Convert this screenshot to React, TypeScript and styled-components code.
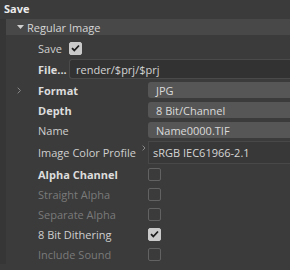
import styled, { createGlobalStyle } from 'styled-components';

const GlobalStyle = createGlobalStyle`
    html, body {
        margin: 0;
        padding: 0;
        background: #3b3b3b;
        overflow: hidden;
    }
    body {
        font-family: 'Open Sans', 'Noto Sans', sans-serif;
        font-size: 11px;
        color: #cfcfcf;
    }
`;

const Panel = styled.div`
    width: 290px;
    height: 270px;
    background: #3b3b3b;
`;

const Header = styled.div`
    height: 17px;
    display: flex;
    align-items: center;
    padding-left: 4px;
    font-weight: 700;
    color: #ececec;
`;

const Group = styled.div`
    margin-top: 2px;
    border-left: 6px solid #363636;
`;

const GroupTitle = styled.div`
    height: 16px;
    display: flex;
    align-items: center;
    gap: 3px;
    padding-left: 11px;
    background: #484848;
    color: #d6d6d6;
    margin-bottom: 3px;
`;

const Row = styled.div<{ $label: number; $height?: number }>`
    display: grid;
    grid-template-columns: 32px ${(p) => p.$label}px 1fr;
    align-items: center;
    height: ${(p) => p.$height ?? 20}px;
`;

const Gutter = styled.div`
    display: flex;
    align-items: center;
    padding-left: 11px;
`;

const Label = styled.div<{ $bold?: boolean; $dim?: boolean }>`
    display: flex;
    align-items: center;
    height: 100%;
    white-space: nowrap;
    font-weight: ${(p) => (p.$bold ? 700 : 400)};
    color: ${(p) => (p.$dim ? '#7a7a7a' : p.$bold ? '#dddddd' : '#cfcfcf')};
`;

const LabelChevron = styled.span`
    margin-left: auto;
    margin-right: 2px;
    align-self: flex-start;
    margin-top: 5px;
    display: flex;
`;

const Control = styled.div`
    display: flex;
    align-items: center;
    min-width: 0;
`;

const PathField = styled.div`
    flex: 1;
    height: 18px;
    display: flex;
    align-items: center;
    padding-left: 6px;
    background: #323232;
    border: 1px solid #4a4a4a;
    border-right: none;
    border-radius: 3px 0 0 3px;
    color: #d2d2d2;
    white-space: nowrap;
`;

const Dropdown = styled.div`
    flex: 1;
    height: 16px;
    display: flex;
    align-items: center;
    padding-left: 8px;
    background: #565656;
    border-radius: 3px 0 0 3px;
    color: #dadada;
    white-space: nowrap;
`;

const ProfileField = styled.div`
    flex: 1;
    height: 21px;
    display: flex;
    align-items: center;
    padding-left: 4px;
    background: #383838;
    border: 1px solid #484848;
    border-right: none;
    color: #d6d6d6;
    white-space: nowrap;
`;

const Box = styled.div<{ $checked?: boolean }>`
    width: 13px;
    height: 13px;
    box-sizing: border-box;
    border-radius: 2px;
    display: flex;
    align-items: center;
    justify-content: center;
    background: ${(p) => (p.$checked ? '#cacaca' : 'transparent')};
    border: 1px solid ${(p) => (p.$checked ? '#cacaca' : '#626262')};
`;

function Check({ checked }: { checked?: boolean }) {
    return (
        <Box $checked={checked}>
            {checked && (
                <svg width="9" height="8" viewBox="0 0 9 8">
                    <path d="M1 4.2 L3.3 6.5 L8 1.5" fill="none" stroke="#1c1c1c" strokeWidth="1.8" />
                </svg>
            )}
        </Box>
    );
}

function Chevron({ color = '#8a8a8a', size = 7 }: { color?: string; size?: number }) {
    return (
        <svg width={size * 0.6} height={size} viewBox="0 0 6 10">
            <path d="M1 1 L5 5 L1 9" fill="none" stroke={color} strokeWidth="1.4" />
        </svg>
    );
}

const SHORT = 31;
const LONG = 110;

const checkRows = [
    { label: 'Alpha Channel', bold: true },
    { label: 'Straight Alpha', dim: true },
    { label: 'Separate Alpha', dim: true },
    { label: '8 Bit Dithering', checked: true },
    { label: 'Include Sound', dim: true },
];

export default function App() {
    return (
        <Panel>
            <GlobalStyle />
            <Header>Save</Header>
            <Group>
                <GroupTitle>
                    <svg width="7" height="4" viewBox="0 0 7 4">
                        <polygon points="0,0 7,0 3.5,4" fill="#cfcfcf" />
                    </svg>
                    Regular Image
                </GroupTitle>

                <Row $label={SHORT}>
                    <Gutter />
                    <Label>Save</Label>
                    <Control>
                        <Check checked />
                    </Control>
                </Row>

                <Row $label={SHORT} $height={22}>
                    <Gutter />
                    <Label $bold>File...</Label>
                    <Control>
                        <PathField>render/$prj/$prj</PathField>
                    </Control>
                </Row>

                <Row $label={LONG}>
                    <Gutter>
                        <Chevron />
                    </Gutter>
                    <Label $bold>Format</Label>
                    <Control>
                        <Dropdown>JPG</Dropdown>
                    </Control>
                </Row>

                <Row $label={LONG}>
                    <Gutter />
                    <Label $bold>Depth</Label>
                    <Control>
                        <Dropdown>8 Bit/Channel</Dropdown>
                    </Control>
                </Row>

                <Row $label={LONG}>
                    <Gutter />
                    <Label>Name</Label>
                    <Control>
                        <Dropdown>Name0000.TIF</Dropdown>
                    </Control>
                </Row>

                <Row $label={LONG} $height={24}>
                    <Gutter />
                    <Label>
                        Image Color Profile
                        <LabelChevron>
                            <Chevron color="#9a9a9a" size={6} />
                        </LabelChevron>
                    </Label>
                    <Control>
                        <ProfileField>sRGB IEC61966-2.1</ProfileField>
                    </Control>
                </Row>

                {checkRows.map((r) => (
                    <Row key={r.label} $label={LONG}>
                        <Gutter />
                        <Label $bold={r.bold} $dim={r.dim}>
                            {r.label}
                        </Label>
                        <Control>
                            <Check checked={r.checked} />
                        </Control>
                    </Row>
                ))}
            </Group>
        </Panel>
    );
}
